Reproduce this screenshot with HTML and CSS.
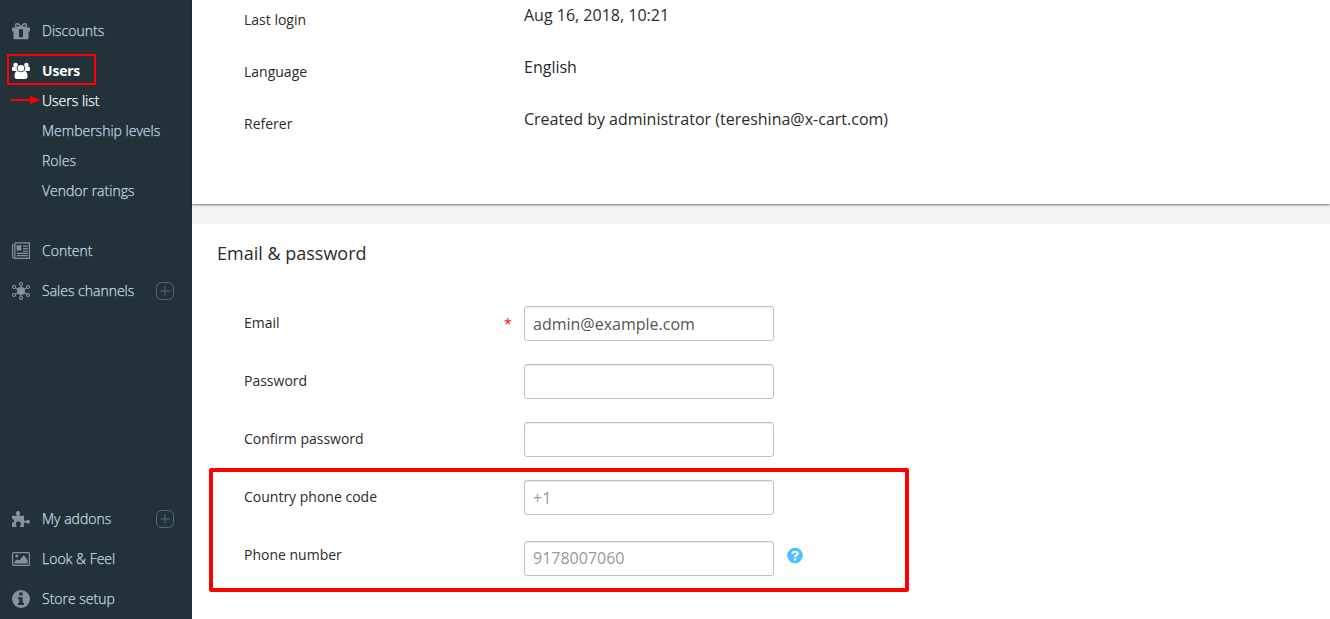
FILE: index.html
```html
<!DOCTYPE html>
<html lang="en">
<head>
<meta charset="utf-8">
<title>User profile</title>
<link rel="stylesheet" href="styles.css">
</head>
<body>
<div class="app">
  <nav class="sidebar">
    <ul class="menu">
      <li class="item">
        <svg class="icon" viewBox="0 0 18 18"><path fill="currentColor" fill-rule="evenodd" d="M.8 5.6h16.4q.8 0 .8.8v3.2h-1.5v6.6q0 1-1 1h-13q-1 0-1-1V9.600H0V6.400q0-.8.8-.8zM7 7.200v8h4v-8z"/><path fill="none" stroke="currentColor" stroke-width="1.400" d="M8.800 5.200C7.800 3 6.600 1.700 5.200 1.700c-2.300 0-2.300 3.300 0 3.500zM9.200 5.200c1-2.200 2.200-3.500 3.600-3.500 2.300 0 2.300 3.300 0 3.500z"/></svg>
        <span class="text">Discounts</span>
      </li>
      <li class="item active">
        <svg class="icon" viewBox="0 0 18 18"><g fill="currentColor"><circle cx="3.600" cy="3" r="2.300"/><circle cx="14.400" cy="3" r="2.300"/><path d="M0 8V6.500Q0 4.500 1.500 4.500q2 1.200 3.500.6c-.5 1.600-.1 2.900.8 4H2Q0 9.100 0 8zM18 8V6.500q0-2-1.500-2-2 1.200-3.500.6c.5 1.600.1 2.900-.8 4H16q2 0 2-1.100z"/><circle cx="9" cy="6.300" r="3.300"/><path d="M2.500 14.300c0-3.300 1.200-5.200 3.300-5.200q3.200 2.400 6.400 0c2.100 0 3.300 1.900 3.300 5.200q0 2.700-2.500 2.700H5q-2.500 0-2.500-2.700z"/></g></svg>
        <span class="text">Users</span>
        <i class="mark"></i>
      </li>
    </ul>
    <ul class="submenu">
      <li class="subitem current">Users list
        <svg class="arrow" viewBox="0 0 30 10"><path stroke="#f00" stroke-width="2" d="M0 5h22"/><path fill="#f00" d="M19 1l11 4-11 4z"/></svg>
      </li>
      <li class="subitem">Membership levels</li>
      <li class="subitem">Roles</li>
      <li class="subitem">Vendor ratings</li>
    </ul>
    <ul class="menu second">
      <li class="item">
        <svg class="icon" viewBox="0 0 18 18"><path fill="none" stroke="currentColor" stroke-width="1.200" d="M2.900.9h14.500v15.400H2.500Q.6 16.300.6 14.500V3h2.200M2.900.9v13.500q0 1.900-1.300 1.900"/><path fill="none" stroke="currentColor" stroke-width="1.200" d="M11 4.100h4.800M11 6.700h4.800M11 9.200h4.800M4.800 11.300h11M4.800 13.600h11"/><path fill="currentColor" d="M4.600 3.200h4.800v5.300H4.600z"/></svg>
        <span class="text">Content</span>
      </li>
      <li class="item">
        <svg class="icon" viewBox="0 0 18 18"><circle cx="9" cy="9" r="4" fill="currentColor"/><g fill="none" stroke="currentColor" stroke-width="1.100"><circle cx="9" cy="2" r="1.500"/><circle cx="9" cy="16" r="1.500"/><circle cx="2" cy="5" r="1.500"/><circle cx="16" cy="5" r="1.500"/><circle cx="2" cy="13" r="1.500"/><circle cx="16" cy="13" r="1.500"/><path d="M9 3.500v11M3.300 5.800l11.400 6.400M14.700 5.800L3.300 12.200"/></g></svg>
        <span class="text">Sales channels</span>
        <svg class="plus" viewBox="0 0 18 18"><rect x=".5" y=".5" width="17" height="17" rx="5"/><path d="M9 4.500v9M4.500 9h9"/></svg>
      </li>
    </ul>
    <ul class="menu bottom">
      <li class="item">
        <svg class="icon" viewBox="0 0 18 18"><path fill="currentColor" d="M0 5.800h4.600V4.600C3.200 3.500 3.900.9 6 .9s2.800 2.600 1.500 3.700v1.200H12v5h2.200c1.300-1.700 3.800-1 3.800 1s-2.500 2.700-3.800 1H12V17H8.200v-1.700c1.200-1.300.5-3.700-1.900-3.700s-3.100 2.400-1.900 3.700V17H0v-4.200c1.200-.2 2.200-.8 2.200-2S1.200 9 0 8.800z"/></svg>
        <span class="text">My addons</span>
        <svg class="plus" viewBox="0 0 18 18"><rect x=".5" y=".5" width="17" height="17" rx="5"/><path d="M9 4.500v9M4.500 9h9"/></svg>
      </li>
      <li class="item">
        <svg class="icon" viewBox="0 0 18 18"><rect x=".6" y="2.600" width="16.800" height="12.800" rx="1" fill="none" stroke="currentColor" stroke-width="1.200"/><circle cx="4.800" cy="6" r="1.600" fill="currentColor"/><path fill="currentColor" d="M2.400 13.500v-2l3-2.200 2 1 4-4.700 1.800 1.200 2.400 3.500v3.200z"/></svg>
        <span class="text">Look &amp; Feel</span>
      </li>
      <li class="item">
        <svg class="icon" viewBox="0 0 18 18"><circle cx="9" cy="9" r="9" fill="currentColor"/><path fill="#223238" d="M7.200 2.600h3.400v3H7.200zM6 7.200h4.600v5.600H12V15H6v-2.200h1.300V9.300H6z"/></svg>
        <span class="text">Store setup</span>
      </li>
    </ul>
  </nav>
  <main class="content">
    <section class="card summary">
      <div class="info"><span class="label">Last login</span><span class="value">Aug 16, 2018, 10:21</span></div>
      <div class="info"><span class="label">Language</span><span class="value">English</span></div>
      <div class="info"><span class="label">Referer</span><span class="value">Created by administrator (tereshina@x-cart.com)</span></div>
    </section>
    <section class="card account">
      <h2 class="title">Email &amp; password</h2>
      <div class="field"><label class="label">Email</label><span class="star">*</span><input class="input" type="text" value="admin@example.com"></div>
      <div class="field"><label class="label">Password</label><span class="star"></span><input class="input" type="password"></div>
      <div class="field"><label class="label">Confirm password</label><span class="star"></span><input class="input" type="password"></div>
      <div class="field"><label class="label">Country phone code</label><span class="star"></span><input class="input" type="text" placeholder="+1"></div>
      <div class="field phone"><label class="label">Phone number</label><span class="star"></span><input class="input" type="text" placeholder="9178007060">
        <svg class="help" viewBox="0 0 16 16"><circle cx="8" cy="7.600" r="7.800" fill="#4bc2ff"/><path fill="none" stroke="#fff" stroke-width="2.200" d="M5.300 5.900C5.700 3.100 10.600 3.100 10.600 5.600c0 1.700-2.500 1.600-2.500 3.500"/><path fill="#fff" d="M6.900 10.200h2.300v2.200H6.900z"/></svg>
      </div>
    </section>
  </main>
  <div class="highlight"></div>
</div>
</body>
</html>
```
FILE: styles.css
```css
* { box-sizing: border-box; }
body { margin: 0; font-family: "Open Sans", sans-serif; color: #333; background: #f2f2f2; }
ul { list-style: none; margin: 0; padding: 0; }
.app { position: relative; display: flex; height: 619px; overflow: hidden; }
.sidebar { display: flex; flex-direction: column; flex: none; width: 192px; padding-top: 11px; background: #223238; color: #c5d9e4; font-size: 14px; font-weight: 300; -webkit-text-stroke: .25px currentColor; }
.item { position: relative; display: flex; align-items: center; height: 40px; padding: 0 18px 0 12px; white-space: nowrap; }
.icon { flex: none; width: 18px; height: 18px; margin-right: 12px; color: #87939c; }
.item .text { flex: 1; line-height: 20px; padding-bottom: 1px; }
.active, .active .icon { color: #fff; }
.active { font-weight: 700; letter-spacing: -.2px; -webkit-text-stroke: 0; }
.mark { position: absolute; left: 7px; top: 3px; width: 89px; height: 31px; border: 2px solid #f00; }
.submenu { margin-top: -5px; }
.subitem { position: relative; height: 30px; padding-left: 42px; line-height: 30px; white-space: nowrap; }
.current { color: #fff; }
.arrow { position: absolute; left: 11px; top: 9px; width: 30px; height: 10px; }
.second { margin-top: 25px; }
.bottom { margin-top: auto; }
.plus { flex: none; width: 18px; height: 18px; fill: none; stroke: #586970; }
.content { flex: 1; display: flex; flex-direction: column; gap: 20px; color: #2b2b2b; }
.card { background: #fff; }
.summary { height: 204px; padding-left: 52px; box-shadow: 0 1px 2px rgba(0, 0, 0, .5); }
.info { display: flex; height: 52px; }
.label { flex: none; width: 254px; font-size: 14px; line-height: 40px; }
.info .label { width: 280px; }
.value { font-size: 16px; line-height: 30px; }
.account { flex: 1; padding: 0 25px; }
.title { margin: 0; height: 70px; font-size: 18px; line-height: 59px; font-weight: 400; }
.field { display: flex; align-items: center; height: 58px; padding-left: 27px; }
.star { width: 26px; padding-left: 6px; color: #f00; font-size: 14px; }
.input { width: 250px; height: 35px; margin-top: 1px; padding: 0 8px; border: 1px solid #c1c1c1; border-radius: 3px; background: #fff; box-shadow: inset 0 1px 1px rgba(0, 0, 0, .075); color: #555; font: 16px "Open Sans", sans-serif; }
.input::placeholder { color: #999; opacity: 1; }
.phone .input { margin-top: 7px; padding-bottom: 2px; }
.help { width: 16px; height: 16px; margin-left: 13px; margin-top: 1px; overflow: visible; }
.highlight { position: absolute; left: 209px; top: 468px; width: 700px; height: 124px; border: 4px solid #f00; border-radius: 2px; }
```
